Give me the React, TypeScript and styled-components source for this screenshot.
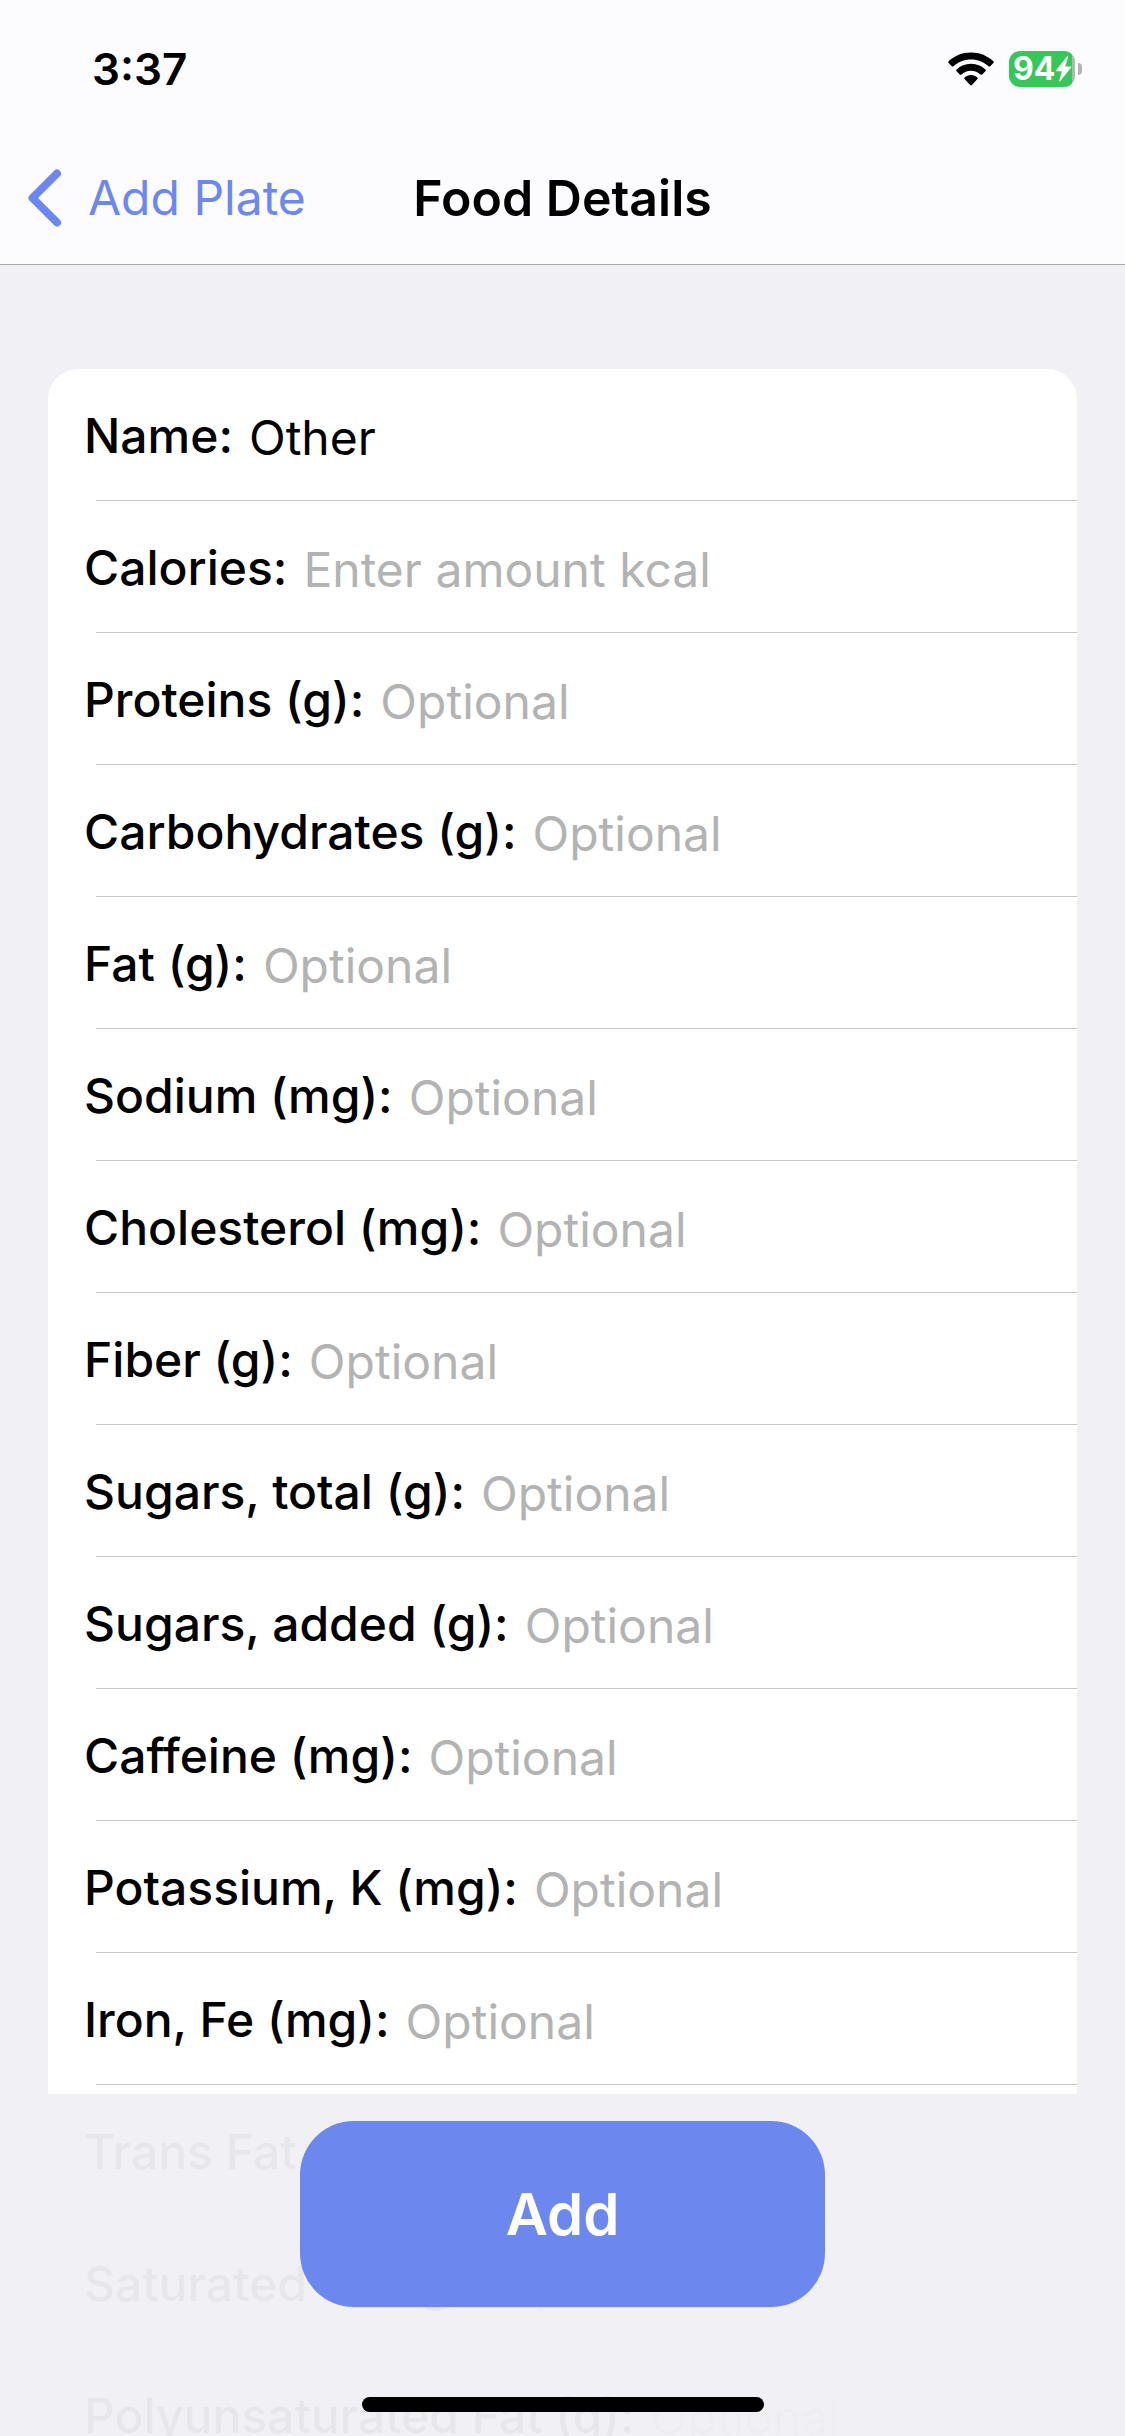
import React from "react";
import styled, { createGlobalStyle } from "styled-components";

const colors = {
  page: "#f0f0f5",
  bar: "#fcfcfe",
  barLine: "#a9a9ad",
  card: "#ffffff",
  line: "#c6c6c8",
  text: "#000000",
  hint: "#b3b3b3",
  accent: "#6c88ee",
  green: "#35c759",
};

const GlobalStyle = createGlobalStyle`
  *, *::before, *::after { box-sizing: border-box; }
  html, body { margin: 0; background: ${colors.page}; }
  body, input, button {
    font-family: Inter, Roboto, "Liberation Sans", sans-serif;
  }
`;

const Screen = styled.div`
  position: relative;
  display: flex;
  flex-direction: column;
  height: 100vh;
  overflow: hidden;
  background: ${colors.page};
  color: ${colors.text};
`;

const Header = styled.header`
  flex: none;
  background: ${colors.bar};
  border-bottom: 1px solid ${colors.barLine};
`;

const StatusBar = styled.div`
  display: flex;
  justify-content: space-between;
  align-items: center;
  height: 132px;
  padding: 6px 43px 0 92px;
`;

const Clock = styled.time`
  font-size: 44px;
  line-height: 56px;
  font-weight: 600;
`;

const StatusIcons = styled.div`
  display: flex;
  align-items: center;
  gap: 15px;
`;

const Battery = styled.div`
  display: flex;
  align-items: center;
  gap: 3px;
`;

const BatteryBody = styled.div`
  display: flex;
  align-items: center;
  width: 66px;
  height: 36px;
  padding-left: 4px;
  border-radius: 11px;
  background: linear-gradient(to right, ${colors.green} 63px, #b4b4b6 63px);
  color: #ffffff;
  font-size: 32px;
  line-height: 36px;
  font-weight: 700;
`;

const BatteryTip = styled.span`
  width: 4px;
  height: 12px;
  border-radius: 0 6px 6px 0;
  background: #b4b4b6;
`;

const NavBar = styled.nav`
  display: grid;
  grid-template-columns: 1fr auto 1fr;
  align-items: center;
  height: 132px;
  padding: 0 26px;
`;

const BackLink = styled.a`
  display: flex;
  align-items: center;
  gap: 25px;
  color: ${colors.accent};
  font-size: 48px;
  line-height: 64px;
  text-decoration: none;
`;

const Title = styled.h1`
  margin: 0;
  font-size: 50px;
  line-height: 64px;
  font-weight: 600;
`;

const Content = styled.main`
  flex: 1;
  min-height: 0;
  overflow: hidden;
  padding: 104px 48px 0;
`;

const Card = styled.form`
  border-radius: 30px;
  background: ${colors.card};
`;

const Row = styled.div`
  display: flex;
  align-items: center;
  gap: 16px;
  height: 132px;
  padding: 2px 36px 0;
  background: linear-gradient(${colors.line}, ${colors.line}) no-repeat 48px 100% / 100% 1px;
`;

const Label = styled.label`
  flex: none;
  font-size: 48px;
  line-height: 64px;
  font-weight: 500;
`;

const Field = styled.input`
  flex: 1;
  min-width: 0;
  height: 66px;
  padding: 2px 0 0;
  border: 0;
  outline: 0;
  background: transparent;
  color: ${colors.text};
  font-size: 48px;
  line-height: 64px;

  &::placeholder {
    color: ${colors.hint};
    opacity: 1;
  }
`;

const Footer = styled.footer`
  position: absolute;
  right: 0;
  bottom: 0;
  left: 0;
  display: flex;
  flex-direction: column;
  align-items: center;
  gap: 90px;
  padding: 27px 0 24px;
  background: rgba(240, 240, 245, 0.96);
`;

const AddButton = styled.button`
  width: 525px;
  height: 186px;
  padding: 0;
  border: 0;
  border-radius: 54px;
  background: ${colors.accent};
  color: #ffffff;
  font-size: 58px;
  line-height: 72px;
  font-weight: 600;
`;

const HomeIndicator = styled.div`
  width: 402px;
  height: 15px;
  border-radius: 8px;
  background: #000000;
`;

interface Nutrient {
  id: string;
  label: string;
  placeholder?: string;
  value?: string;
}

const nutrients: Nutrient[] = [
  { id: "name", label: "Name:", value: "Other" },
  { id: "calories", label: "Calories:", placeholder: "Enter amount kcal" },
  { id: "proteins", label: "Proteins (g):" },
  { id: "carbohydrates", label: "Carbohydrates (g):" },
  { id: "fat", label: "Fat (g):" },
  { id: "sodium", label: "Sodium (mg):" },
  { id: "cholesterol", label: "Cholesterol (mg):" },
  { id: "fiber", label: "Fiber (g):" },
  { id: "sugars-total", label: "Sugars, total (g):" },
  { id: "sugars-added", label: "Sugars, added (g):" },
  { id: "caffeine", label: "Caffeine (mg):" },
  { id: "potassium", label: "Potassium, K (mg):" },
  { id: "iron", label: "Iron, Fe (mg):" },
  { id: "trans-fat", label: "Trans Fat (g):" },
  { id: "saturated-fat", label: "Saturated Fat (g):" },
  { id: "polyunsaturated-fat", label: "Polyunsaturated Fat (g):" },
];

const WifiIcon = () => (
  <svg width="46" height="34" viewBox="0 0 46 34" aria-hidden="true">
    <path d="M23 0.5C31.8 0.5 39.700 3.900 45.400 9.300C45.900 9.800 45.900 10.500 45.400 11L42.200 14.200C41.700 14.700 41 14.700 40.500 14.200C35.900 10 29.800 7.500 23 7.500S10.100 10 5.500 14.200C5 14.700 4.300 14.700 3.800 14.200L0.600 11C0.100 10.500 0.100 9.800 0.600 9.300C6.300 3.900 14.200 0.500 23 0.500Z" />
    <path d="M23 11.800C28.600 11.800 33.700 14 37.400 17.500C37.900 18 37.900 18.700 37.400 19.200L34.200 22.400C33.700 22.800 33 22.800 32.500 22.400C30 20.100 26.700 18.700 23 18.700S16 20.100 13.500 22.400C13 22.800 12.300 22.800 11.800 22.400L8.600 19.200C8.100 18.700 8.100 18 8.600 17.500C12.300 14 17.400 11.800 23 11.800Z" />
    <path d="M23 22.900C25.500 22.900 27.700 23.900 29.400 25.400C29.900 25.900 29.900 26.600 29.400 27.100L23.900 32.900C23.400 33.400 22.600 33.400 22.100 32.900L16.600 27.100C16.100 26.600 16.100 25.900 16.600 25.400C18.300 23.900 20.500 22.900 23 22.900Z" />
  </svg>
);

const BoltIcon = () => (
  <svg width="17" height="26" viewBox="0 0 17 26" aria-hidden="true">
    <path d="M12 0.500L1 14.200C0.600 14.800 0.800 15.300 1.500 15.300H7L4.200 24.500C3.900 25.500 4.700 25.800 5.300 25.100L16.200 11.500C16.700 10.900 16.500 10.400 15.700 10.400H10.200L13.100 1.100C13.400 0.200 12.600 -0.200 12 0.500Z" fill="#ffffff" />
  </svg>
);

const ChevronIcon = () => (
  <svg width="37" height="60" viewBox="0 0 37 60" aria-hidden="true">
    <path d="M31 5.500L6.500 30L31 54.500" fill="none" stroke="currentColor" strokeWidth="8" strokeLinecap="round" strokeLinejoin="round" />
  </svg>
);

export default function App() {
  return (
    <>
      <GlobalStyle />
      <Screen>
        <Header>
          <StatusBar>
            <Clock>3:37</Clock>
            <StatusIcons>
              <WifiIcon />
              <Battery>
                <BatteryBody>
                  94
                  <BoltIcon />
                </BatteryBody>
                <BatteryTip />
              </Battery>
            </StatusIcons>
          </StatusBar>
          <NavBar>
            <BackLink href="#plate">
              <ChevronIcon />
              Add Plate
            </BackLink>
            <Title>Food Details</Title>
          </NavBar>
        </Header>
        <Content>
          <Card id="food-details">
            {nutrients.map(({ id, label, value, placeholder = "Optional" }) => (
              <Row key={id}>
                <Label htmlFor={id}>{label}</Label>
                <Field id={id} type="text" defaultValue={value} placeholder={placeholder} />
              </Row>
            ))}
          </Card>
        </Content>
        <Footer>
          <AddButton type="submit" form="food-details">Add</AddButton>
          <HomeIndicator />
        </Footer>
      </Screen>
    </>
  );
}
